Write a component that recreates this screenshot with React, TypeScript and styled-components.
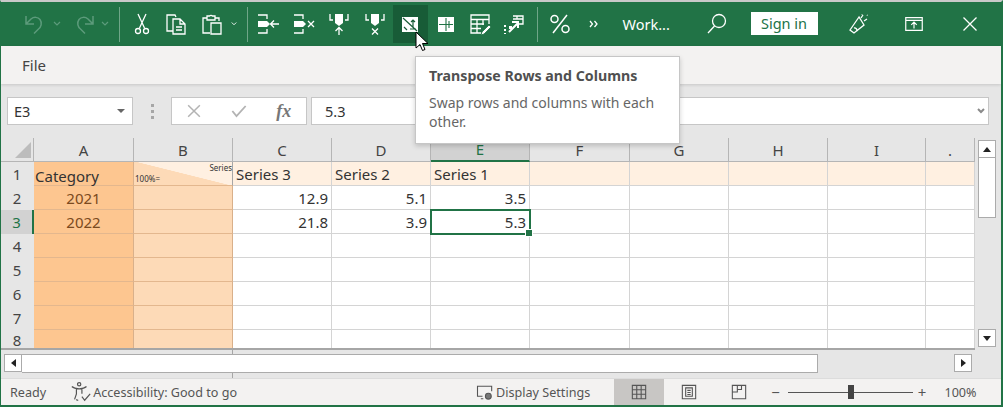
import React from 'react';
import styled, { createGlobalStyle } from 'styled-components';

const GlobalStyle = createGlobalStyle`
  html, body { margin: 0; padding: 0; background: #fff; }
  * { box-sizing: border-box; }
`;

const UI_FONT = `"Noto Sans", "Open Sans", sans-serif`;

const Window = styled.div`
  position: relative;
  width: 1003px;
  height: 407px;
  overflow: hidden;
  display: flex;
  flex-direction: column;
  background: #e6e6e6;
  border-top: 2px solid #c9c9c9;
  border-left: 1px solid #217346;
  border-right: 2px solid #217346;
  border-bottom: 2px solid #217346;
  font-family: ${UI_FONT};
  color: #444;
`;

const TitleBar = styled.div`
  display: flex;
  align-items: stretch;
  height: 44px;
  flex: none;
  padding-left: 17px;
  background: #217346;
  color: #fff;
`;

const ToolButton = styled.div<{ $w?: number; $ml?: number; $active?: boolean }>`
  display: flex;
  align-items: center;
  justify-content: center;
  flex: none;
  width: ${(p) => p.$w ?? 34}px;
  margin-left: ${(p) => p.$ml ?? 0}px;
  margin-top: 3px;
  margin-bottom: 3px;
  background: ${(p) => (p.$active ? '#185c37' : 'transparent')};
`;

const Divider = styled.div<{ $ml: number }>`
  flex: none;
  width: 1px;
  margin: 5px 0 4px ${(p) => p.$ml}px;
  background: #6fa688;
`;

const WorkName = styled.div`
  flex: none;
  width: 46px;
  margin-left: 12px;
  align-self: center;
  font-size: 14.5px;
  white-space: nowrap;
`;

const SignIn = styled.div`
  flex: none;
  align-self: center;
  width: 67px;
  height: 23px;
  margin-left: 17px;
  margin-top: -1px;
  background: #fff;
  color: #217346;
  font-size: 14.5px;
  line-height: 23px;
  text-align: center;
`;

const MenuBar = styled.div`
  height: 38px;
  flex: none;
  display: flex;
  align-items: center;
  padding-left: 21px;
  background: #f3f2f1;
  font-size: 15px;
  color: #444;
  box-shadow: 0 1px 3px rgba(0, 0, 0, 0.14);
`;

const FormulaRow = styled.div`
  height: 54px;
  flex: none;
  display: flex;
  align-items: flex-start;
  padding: 13px 12px 0 6px;
`;

const FieldBox = styled.div<{ $w?: number; $ml?: number }>`
  display: flex;
  align-items: center;
  height: 28px;
  flex: ${(p) => (p.$w ? 'none' : '1')};
  width: ${(p) => (p.$w ? `${p.$w}px` : 'auto')};
  margin-left: ${(p) => p.$ml ?? 0}px;
  background: #fff;
  border: 1px solid #c6c6c6;
  font-size: 14.5px;
  color: #333;
`;

const NameText = styled.span`
  flex: 1;
  padding-left: 6px;
`;

const FieldText = styled.span`
  flex: 1;
  padding-left: 13px;
`;

const FieldEnd = styled.span`
  display: flex;
  margin-right: 3px;
`;

const CaretDown = styled.span`
  width: 0;
  height: 0;
  margin-right: 7px;
  border-left: 4px solid transparent;
  border-right: 4px solid transparent;
  border-top: 4px solid #666;
`;

const GripDots = styled.div`
  flex: none;
  width: 38px;
  display: flex;
  flex-direction: column;
  align-items: center;
  gap: 3px;
  padding-top: 7px;
  span {
    width: 3px;
    height: 3px;
    background: #a6a6a6;
  }
`;

const FxCell = styled.div`
  flex: 1;
  display: flex;
  align-items: center;
  justify-content: center;
  color: #a6a6a6;
`;

const FxLabel = styled.span`
  font-family: 'Liberation Serif', serif;
  font-style: italic;
  font-weight: 700;
  font-size: 18px;
  color: #777;
`;

const SheetArea = styled.div`
  display: flex;
  align-items: flex-start;
  height: 212px;
  flex: none;
`;

const SheetGrid = styled.div`
  display: grid;
  grid-template-columns: 33px 100px repeat(4, 99px) 100px 99px 99px 98px 49px;
  grid-template-rows: repeat(8, 24px) 20px;
  width: 974px;
  height: 212px;
  flex: none;
  overflow: hidden;
  font-size: 15px;
  color: #333;
  background: #fff;
  border-bottom: 2px solid #a6a6a6;
`;

const Corner = styled.div`
  background: #e6e6e6;
  border-right: 1px solid #b5b5b5;
  border-bottom: 1px solid #b5b5b5;
  display: flex;
  align-items: flex-end;
  justify-content: flex-end;
  padding: 0 2px 3px 0;
`;

const CornerMark = styled.span`
  width: 0;
  height: 0;
  border-style: solid;
  border-width: 0 0 16px 16px;
  border-color: transparent transparent #bcbcbc transparent;
`;

const ColHead = styled.div<{ $selected?: boolean }>`
  display: flex;
  align-items: center;
  justify-content: center;
  background: ${(p) => (p.$selected ? '#d2d2d2' : '#e6e6e6')};
  color: ${(p) => (p.$selected ? '#217346' : '#444')};
  border-right: 1px solid #b5b5b5;
  border-bottom: ${(p) => (p.$selected ? '2px solid #217346' : '1px solid #b5b5b5')};
  font-size: 15px;
`;

const RowHead = styled.div<{ $selected?: boolean }>`
  display: flex;
  align-items: center;
  justify-content: center;
  background: ${(p) => (p.$selected ? '#d2d2d2' : '#e6e6e6')};
  color: ${(p) => (p.$selected ? '#217346' : '#444')};
  border-right: ${(p) => (p.$selected ? '2px solid #217346' : '1px solid #e6e6e6')};
  font-size: 15px;
`;

const CELL_FILL: Record<string, string> = {
  white: '#fff',
  header: '#fff0e1',
  a: '#fdc690',
  b: '#fddab7',
};

const Cell = styled.div<{ $fill?: string; $align?: string; $tone?: string }>`
  position: relative;
  display: flex;
  align-items: flex-end;
  justify-content: ${(p) => p.$align ?? 'flex-start'};
  padding: 0 3px 0 3px;
  line-height: 22px;
  white-space: nowrap;
  background: ${(p) => CELL_FILL[p.$fill ?? 'white']};
  color: ${(p) => p.$tone ?? '#333'};
  border-right: 1px solid ${(p) => (p.$fill === 'a' || p.$fill === 'b' ? '#d9b08a' : '#d4d4d4')};
  border-bottom: 1px solid ${(p) => (p.$fill === 'a' || p.$fill === 'b' ? '#e3b78e' : '#d4d4d4')};
`;

const CategoryCell = styled(Cell)`
  padding-left: 1px;
  line-height: 17px;
`;

const DiagonalCell = styled(Cell)`
  flex-direction: column;
  align-items: stretch;
  justify-content: space-between;
  padding: 1px 0 1px 1px;
  background: linear-gradient(14deg, #fddab7 49.5%, #fff0e1 50.5%);
  font-size: 8px;
  line-height: 10px;
  border-right: 1px solid #a6a6a6;
`;

const DiagonalTop = styled.span`
  align-self: flex-end;
`;

const DiagonalBottom = styled.span`
  align-self: flex-start;
`;

const ActiveCell = styled(Cell)`
  outline: 2px solid #217346;
  outline-offset: -1px;
  z-index: 1;
  &::after {
    content: '';
    position: absolute;
    right: -4px;
    bottom: -4px;
    width: 6px;
    height: 6px;
    background: #217346;
    border: 1px solid #fff;
  }
`;

const VScroll = styled.div`
  flex: none;
  width: 18px;
  height: 207px;
  margin: 2px 0 0 3px;
  display: flex;
  flex-direction: column;
`;

const ScrollBtn = styled.div`
  flex: none;
  width: 18px;
  height: 18px;
  display: flex;
  align-items: center;
  justify-content: center;
  background: #fff;
  border: 1px solid #ababab;
`;

const Thumb = styled.div`
  flex: none;
  height: 60px;
  background: #fff;
  border: 1px solid #ababab;
  border-top: 0;
`;

const Track = styled.div`
  flex: 1;
`;

const Arrow = styled.span<{ $dir: 'up' | 'down' | 'left' | 'right' }>`
  width: 0;
  height: 0;
  border-style: solid;
  border-color: transparent;
  ${(p) =>
    p.$dir === 'up'
      ? 'border-width: 0 4px 5px 4px; border-bottom-color: #222;'
      : p.$dir === 'down'
        ? 'border-width: 5px 4px 0 4px; border-top-color: #222;'
        : p.$dir === 'left'
          ? 'border-width: 4px 5px 4px 0; border-right-color: #222;'
          : 'border-width: 4px 0 4px 5px; border-left-color: #222;'}
`;

const HScroll = styled.div`
  position: relative;
  z-index: 1;
  height: 19px;
  flex: none;
  margin: 4px 0 0 3px;
  display: flex;
  width: 968px;
  background: #e6e6e6;
`;

const HThumb = styled.div`
  flex: none;
  width: 796px;
  background: #fff;
  border: 1px solid #ababab;
  border-left: 0;
`;

const HTrack = styled.div`
  flex: 1;
`;

const StatusBar = styled.div`
  position: relative;
  z-index: 1;
  flex: 1;
  margin-top: 5px;
  display: flex;
  align-items: stretch;
  background: #f3f2f1;
  font-size: 12.6px;
  color: #555;
  border-top: 1px solid #dcdcdc;
`;

const StatusText = styled.div<{ $ml: number; $w?: number }>`
  flex: none;
  display: flex;
  align-items: center;
  gap: 1px;
  margin-left: ${(p) => p.$ml}px;
  white-space: nowrap;
`;

const ViewButton = styled.div<{ $ml?: number; $selected?: boolean }>`
  flex: none;
  width: 50px;
  margin-left: ${(p) => p.$ml ?? 0}px;
  display: flex;
  align-items: center;
  justify-content: center;
  background: ${(p) => (p.$selected ? '#c8c6c4' : 'transparent')};
`;

const ZoomSlider = styled.div`
  position: relative;
  flex: none;
  width: 125px;
  height: 1px;
  margin-left: 8px;
  align-self: center;
  background: #555;
`;

const ZoomKnob = styled.span`
  position: absolute;
  left: 60px;
  top: -7px;
  width: 6px;
  height: 14px;
  background: #444;
`;

const ZoomGlyph = styled.span<{ $ml: number }>`
  flex: none;
  align-self: center;
  margin-left: ${(p) => p.$ml}px;
  font-size: 15px;
  color: #555;
`;

const Tooltip = styled.div`
  position: absolute;
  left: 414px;
  top: 54px;
  width: 265px;
  height: 88px;
  padding: 10px 13px;
  background: #fff;
  border: 1px solid #c6c6c6;
  box-shadow: 0 2px 5px rgba(0, 0, 0, 0.18);
  z-index: 5;
`;

const TipTitle = styled.div`
  font-size: 14.2px;
  font-weight: 700;
  line-height: 18px;
  color: #505050;
  white-space: nowrap;
`;

const TipBody = styled.div`
  margin-top: 8px;
  font-size: 14px;
  line-height: 19px;
  color: #666;
`;

const Cursor = styled.svg`
  position: absolute;
  left: 414px;
  top: 29px;
  z-index: 6;
`;

const Freeze = styled.span`
  position: absolute;
  left: 231px;
  top: 348px;
  width: 1px;
  height: 28px;
  background: #a6a6a6;
  z-index: 0;
`;

const TICK = { fill: 'none', stroke: '#fff', strokeWidth: 1.3 };

const Ico: React.FC<{ size?: number; color?: string; children: React.ReactNode }> = ({
  size = 24,
  color = '#fff',
  children,
}) => (
  <svg width={size} height={size} viewBox="0 0 24 24" fill="none" stroke={color} strokeWidth={1.3}>
    {children}
  </svg>
);

const Chevron: React.FC<{ color?: string; weight?: number }> = ({ color = '#fff', weight = 1.2 }) => (
  <svg width="8" height="6" viewBox="0 0 8 6" fill="none" stroke={color} strokeWidth={weight}>
    <path d="M1 1l3 3 3-3" />
  </svg>
);

const FADED = '#5c9b7b';

const ColumnIn: React.FC<{ mark: 'arrow' | 'x' }> = ({ mark }) => (
  <Ico>
    <path d="M2 3h9v4M2 21h9v-4" />
    <path d="M2 9h9l3 3-3 3H2z" fill="#fff" stroke="none" />
    {mark === 'arrow' ? <path d="M23 12h-8M18 8.500L14.500 12l3.500 3.500" /> : <path d="M16 9l6 6M22 9l-6 6" />}
  </Ico>
);

const RowIn: React.FC<{ mark: 'arrow' | 'x' }> = ({ mark }) => (
  <Ico>
    <path d="M3 2v6h3M21 2v6h-3" />
    <path d="M8 2h8v9l-4 3-4-3z" fill="#fff" stroke="none" />
    {mark === 'arrow' ? <path d="M12 23v-8M8.500 19l3.500-3.500 3.500 3.500" /> : <path d="M9 16.500l6 6M15 16.500l-6 6" />}
  </Ico>
);

const Row: React.FC<{ n: number; selected?: boolean; children?: React.ReactNode }> = ({ n, selected, children }) => (
  <>
    <RowHead $selected={selected}>{n}</RowHead>
    {children}
  </>
);

const BlankCells: React.FC<{ count: number; fill?: string }> = ({ count, fill }) => (
  <>
    {Array.from({ length: count }, (_, i) => (
      <Cell key={i} $fill={fill} />
    ))}
  </>
);

const App: React.FC = () => {
  const columns = ['A', 'B', 'C', 'D', 'E', 'F', 'G', 'H', 'I', '.'];
  return (
    <>
      <GlobalStyle />
      <Window>
        <TitleBar>
          <ToolButton>
            <Ico color={FADED}>
              <path d="M3 4v8h8M3.500 11.500L8 7c3-2.500 7-2 9 .5 2.500 3.500 1 7.500-1.500 9.500L11 21.500" strokeWidth={1.5} />
            </Ico>
          </ToolButton>
          <ToolButton $w={10}>
            <Chevron color={FADED} />
          </ToolButton>
          <ToolButton $ml={5}>
            <Ico color={FADED}>
              <path d="M21 4v8h-8M20.500 11.500L16 7c-3-2.500-7-2-9 .5-2.500 3.500-1 7.500 1.500 9.500L13 21.500" strokeWidth={1.5} />
            </Ico>
          </ToolButton>
          <ToolButton $w={8}>
            <Chevron color={FADED} />
          </ToolButton>
          <Divider $ml={10} />

          <ToolButton $ml={5}>
            <Ico>
              <path d="M8 2l6.500 14M16 2L9.500 16" />
              <circle cx="8" cy="19" r="2.500" />
              <circle cx="16" cy="19" r="2.500" />
            </Ico>
          </ToolButton>
          <ToolButton>
            <Ico>
              <path d="M9 19H3V3h8l1 2" />
              <path d="M9 7h7l5 5v10H9zM16 7v5h5M12 15h6M12 18h6" />
            </Ico>
          </ToolButton>
          <ToolButton $w={38}>
            <Ico>
              <path d="M10 21H3V6h4M15 6h4v3" />
              <path d="M7 4h2.500a2 2 0 0 1 3 0H15v4H7z" />
              <path d="M11 11h10v11H11z" />
            </Ico>
          </ToolButton>
          <ToolButton $w={6}>
            <Chevron />
          </ToolButton>
          <Divider $ml={10} />

          <ToolButton $w={35.5} $ml={2.5}>
            <ColumnIn mark="arrow" />
          </ToolButton>
          <ToolButton $w={35.5}>
            <ColumnIn mark="x" />
          </ToolButton>
          <ToolButton $w={35.5}>
            <RowIn mark="arrow" />
          </ToolButton>
          <ToolButton $w={35.5}>
            <RowIn mark="x" />
          </ToolButton>
          <ToolButton $w={35.5} $active>
            <Ico size={24}>
              <path d="M4 5h16v15H4z" fill="#fff" stroke="none" />
              <path d="M5 6l14 13M12 17h6M15 8v7M13 10l2-2 2 2M6 15l3 3" stroke="#185c37" strokeWidth={1.2} />
            </Ico>
          </ToolButton>
          <ToolButton $w={35.5}>
            <Ico>
              <path d="M4 5h16v15H4z" fill="#fff" stroke="none" />
              <path d="M12 6v13M5 12.500h14M15 9v7" stroke="#217346" strokeWidth={1.1} />
            </Ico>
          </ToolButton>
          <ToolButton $w={33}>
            <Ico>
              <path d="M13 21H3V3h18v9" />
              <path d="M3 7.500h18M3 12h13M3 16.500h10M9 7.500V21M15 7.500V13" />
              <path d="M14 20l7-7 2 2-7 7-3 1z" fill="#fff" stroke="#217346" strokeWidth={0.8} />
            </Ico>
          </ToolButton>
          <ToolButton $w={33}>
            <Ico>
              <path d="M4 13v9" strokeDasharray="2 2" strokeWidth={2} />
              <path d="M12 4h10v8H17M12 7h10M16 4v3" />
              <path d="M8 20l9-9M11 10h6v6" strokeWidth={2} />
              <path d="M8 14h3v3H8z" fill="#fff" stroke="none" />
            </Ico>
          </ToolButton>
          <Divider $ml={7} />

          <ToolButton $ml={5}>
            <Ico>
              <path d="M19 3L5 21" strokeWidth={1.5} />
              <circle cx="6.500" cy="7" r="3.500" strokeWidth={1.5} />
              <circle cx="17.500" cy="17" r="3.500" strokeWidth={1.5} />
            </Ico>
          </ToolButton>
          <ToolButton>
            <svg width="10" height="8" viewBox="0 0 10 8" {...TICK}>
              <path d="M1 1l2.500 3L1 7M5.500 1L8 4 5.500 7" />
            </svg>
          </ToolButton>
          <WorkName>Work...</WorkName>
          <ToolButton $ml={31}>
            <Ico>
              <circle cx="14" cy="9" r="6.500" />
              <path d="M9.500 14L3 21" />
            </Ico>
          </ToolButton>
          <SignIn>Sign in</SignIn>
          <ToolButton $ml={23}>
            <Ico>
              <path d="M13 5L4 18l4 3 10-8z" />
              <path d="M8 16a2.500 2.500 0 0 1 3 3M15 6l2-3M18 9l3-2M16 2v.5M21 3l.5.5" />
            </Ico>
          </ToolButton>
          <ToolButton $ml={22}>
            <Ico size={22}>
              <path d="M3 5h18v14H3zM3 8h18M12 17v-7M9 13l3-3 3 3" />
            </Ico>
          </ToolButton>
          <ToolButton $ml={22}>
            <Ico>
              <path d="M5.500 5.500l13 13M18.500 5.500l-13 13" />
            </Ico>
          </ToolButton>
        </TitleBar>

        <MenuBar>File</MenuBar>

        <FormulaRow>
          <FieldBox $w={126}>
            <NameText>E3</NameText>
            <CaretDown />
          </FieldBox>
          <GripDots>
            <span />
            <span />
            <span />
          </GripDots>
          <FieldBox $w={136}>
            <FxCell>
              <Ico size={20} color="#b3b3b3">
                <path d="M5 5l14 14M19 5L5 19" strokeWidth={1.8} />
              </Ico>
            </FxCell>
            <FxCell>
              <Ico size={20} color="#b3b3b3">
                <path d="M4 12l5 6L20 6" strokeWidth={2.2} />
              </Ico>
            </FxCell>
            <FxCell>
              <FxLabel>fx</FxLabel>
            </FxCell>
          </FieldBox>
          <FieldBox $ml={4}>
            <FieldText>5.3</FieldText>
            <FieldEnd>
              <Chevron color="#8a8a8a" weight={2} />
            </FieldEnd>
          </FieldBox>
        </FormulaRow>

        <SheetArea>
          <SheetGrid>
            <Corner>
              <CornerMark />
            </Corner>
            {columns.map((c) => (
              <ColHead key={c} $selected={c === 'E'}>
                {c}
              </ColHead>
            ))}

            <Row n={1}>
              <CategoryCell $fill="a">Category</CategoryCell>
              <DiagonalCell $fill="b">
                <DiagonalTop>Series</DiagonalTop>
                <DiagonalBottom>100%=</DiagonalBottom>
              </DiagonalCell>
              <Cell $fill="header">Series 3</Cell>
              <Cell $fill="header">Series 2</Cell>
              <Cell $fill="header">Series 1</Cell>
              <BlankCells count={5} fill="header" />
            </Row>
            <Row n={2}>
              <Cell $fill="a" $align="center" $tone="#7b4a20">
                2021
              </Cell>
              <Cell $fill="b" />
              <Cell $align="flex-end">12.9</Cell>
              <Cell $align="flex-end">5.1</Cell>
              <Cell $align="flex-end">3.5</Cell>
              <BlankCells count={5} />
            </Row>
            <Row n={3} selected>
              <Cell $fill="a" $align="center" $tone="#7b4a20">
                2022
              </Cell>
              <Cell $fill="b" />
              <Cell $align="flex-end">21.8</Cell>
              <Cell $align="flex-end">3.9</Cell>
              <ActiveCell $align="flex-end">5.3</ActiveCell>
              <BlankCells count={5} />
            </Row>
            {[4, 5, 6, 7, 8].map((n) => (
              <Row key={n} n={n}>
                <Cell $fill="a" />
                <Cell $fill="b" />
                <BlankCells count={8} />
              </Row>
            ))}
          </SheetGrid>
          <VScroll>
            <ScrollBtn>
              <Arrow $dir="up" />
            </ScrollBtn>
            <Thumb />
            <Track />
            <ScrollBtn>
              <Arrow $dir="down" />
            </ScrollBtn>
          </VScroll>
        </SheetArea>

        <HScroll>
          <ScrollBtn>
            <Arrow $dir="left" />
          </ScrollBtn>
          <HThumb />
          <HTrack />
          <ScrollBtn>
            <Arrow $dir="right" />
          </ScrollBtn>
        </HScroll>

        <StatusBar>
          <StatusText $ml={9}>Ready</StatusText>
          <StatusText $ml={24}>
            <Ico size={22} color="#555">
              <circle cx="10" cy="3.500" r="1.800" />
              <path d="M2 6c2 2 4 2.500 8 2.500S16 8 18 6M7 9v5l-2 6M13 9v5M7 20a2 2 0 0 0 2 1M13 17l3 4 6-7" />
            </Ico>
            Accessibility: Good to go
          </StatusText>
          <StatusText $ml={238}>
            <Ico size={20} color="#555">
              <path d="M9 17H3V5h17v6M7 20h3" />
              <circle cx="16" cy="17" r="3.500" fill="#777" />
            </Ico>
            Display Settings
          </StatusText>
          <ViewButton $ml={24} $selected>
            <Ico size={20} color="#555">
              <path d="M4 4h16v16H4zM4 9.300h16M4 14.600h16M9.300 4v16M14.600 4v16" />
            </Ico>
          </ViewButton>
          <ViewButton>
            <Ico size={20} color="#555">
              <path d="M4 4h16v16H4zM8 7h8v10H8zM10 10h4M10 12.500h4M10 15h4" />
            </Ico>
          </ViewButton>
          <ViewButton>
            <Ico size={20} color="#555">
              <path d="M4 4h16v16H4zM10 4v8H4M10 4h5v5h-5" />
            </Ico>
          </ViewButton>
          <ZoomGlyph $ml={7}>−</ZoomGlyph>
          <ZoomSlider>
            <ZoomKnob />
          </ZoomSlider>
          <ZoomGlyph $ml={5}>+</ZoomGlyph>
          <StatusText $ml={18}>100%</StatusText>
        </StatusBar>

        <Freeze />

        <Tooltip>
          <TipTitle>Transpose Rows and Columns</TipTitle>
          <TipBody>
            Swap rows and columns with each
            <br />
            other.
          </TipBody>
        </Tooltip>
        <Cursor width="14" height="22" viewBox="0 0 14 22">
          <path d="M1 1v16l4-3.500 2.500 6 2.500-1-2.500-6H13z" fill="#fff" stroke="#000" strokeWidth={1} />
        </Cursor>
      </Window>
    </>
  );
};

export default App;
